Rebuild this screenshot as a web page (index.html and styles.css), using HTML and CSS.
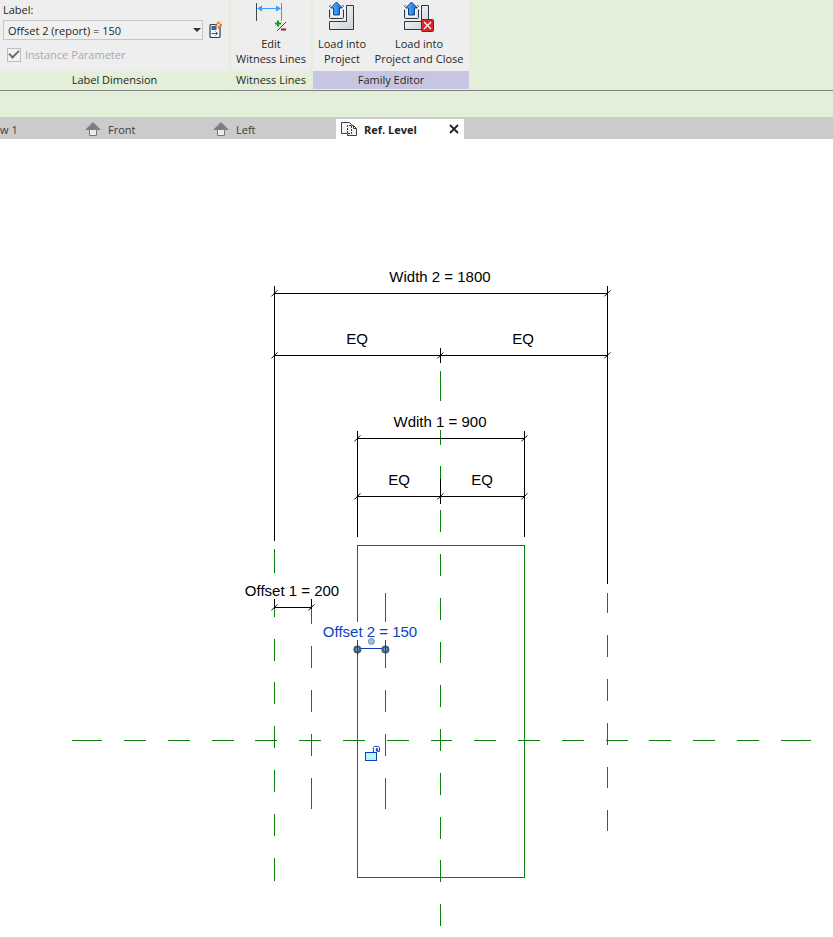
FILE: index.html
```html
<!DOCTYPE html>
<html lang="en">
<head>
    <meta charset="UTF-8">
    <meta name="viewport" content="width=device-width, initial-scale=1.0">
    <title>Family Editor - Ref. Level</title>
    <link rel="stylesheet" href="styles.css">
</head>
<body>
    <header class="ribbon">
        <section class="panel panel-label">
            <div class="panel-body label-body">
                <label class="field-label" for="labelSelect">Label:</label>
                <div class="field-row">
                    <div class="select-wrap">
                        <select id="labelSelect" class="select">
                            <option>Offset 2 (report) = 150</option>
                        </select>
                    </div>
                    <button class="icon-button" type="button" aria-label="Create parameter">
                        <svg width="14" height="18" viewBox="0 0 14 18">
                            <rect x="1" y="3.500" width="10" height="13" rx="1" fill="#f4f7fa" stroke="#2f3b4c" stroke-width="1.200"/>
                            <path d="M2.500 5h5v4h-5z" fill="#2f6aa8"/>
                            <path d="M2.500 12.500h6M6.500 10.500l2 2-2 2" fill="none" stroke="#3b5f86"/>
                            <path d="M9.500 .5v7M6 4h7" stroke="#e8501c" stroke-width="1.400"/>
                            <path d="M7 1.500l5 5M12 1.500l-5 5" stroke="#f07a1e"/>
                            <circle cx="9.500" cy="4" r="1.500" fill="#ffe36a"/>
                        </svg>
                    </button>
                </div>
                <label class="check">
                    <input class="check-box" type="checkbox" checked disabled>
                    <span>Instance Parameter</span>
                </label>
            </div>
            <h2 class="panel-title">Label Dimension</h2>
        </section>

        <section class="panel panel-witness">
            <div class="panel-body tools">
                <button class="tool" type="button">
                    <svg class="tool-icon" width="32" height="34" viewBox="1 -1 32 34">
                        <path d="M2.500 3v18" stroke="#3c4653" fill="none"/>
                        <path d="M27.500 3v18" stroke="#3a9bfc" fill="none"/>
                        <path d="M4 8.500h22" stroke="#3a9bfc"/>
                        <path d="M3 8.500l5-3v6zM27 8.500l-5-3v6z" fill="#3a9bfc"/>
                        <path d="M24 20.500v6M21 23.500h6" stroke="#169a1c" stroke-width="2"/>
                        <path d="M23 31l9-9" stroke="#3c4653"/>
                        <path d="M27 29.500h5" stroke="#b80f22" stroke-width="2"/>
                    </svg>
                    <span>Edit<br>Witness Lines</span>
                </button>
            </div>
            <h2 class="panel-title">Witness Lines</h2>
        </section>

        <section class="panel panel-family">
            <div class="panel-body tools">
                <button class="tool tool-load" type="button">
                    <svg class="tool-icon" width="32" height="34" viewBox="0 0 32 34">
                        <defs>
                            <linearGradient id="block" x1="0" y1="0" x2="1" y2="1">
                                <stop offset="0" stop-color="#fdfdfd"/>
                                <stop offset="1" stop-color="#cdd0d5"/>
                            </linearGradient>
                            <linearGradient id="arrow" x1="0" y1="0" x2="1" y2="0">
                                <stop offset="0" stop-color="#5db4fb"/>
                                <stop offset="1" stop-color="#0d6fe0"/>
                            </linearGradient>
                        </defs>
                        <path d="M20.500 6.500h7v24h-24v-8h17z" fill="url(#block)" stroke="#2e3746" stroke-linejoin="round"/>
                        <rect x="3.500" y="6.500" width="14" height="13" rx="1" fill="#e2e4e8" stroke="#2e3746"/>
                        <path d="M10.500 3l6 6h-3v7h-6v-7h-3z" fill="none" stroke="#fff" stroke-width="3"/>
                        <path d="M10.500 3l6 6h-3v7h-6v-7h-3z" fill="url(#arrow)" stroke="#123f7c"/>
                    </svg>
                    <span>Load into<br>Project</span>
                </button>
                <button class="tool tool-close" type="button">
                    <svg class="tool-icon" width="32" height="34" viewBox="2 0 32 34">
                        <path d="M20.500 6.500h7v24h-24v-8h17z" fill="url(#block)" stroke="#2e3746" stroke-linejoin="round"/>
                        <rect x="3.500" y="6.500" width="14" height="13" rx="1" fill="#e2e4e8" stroke="#2e3746"/>
                        <path d="M10.500 3l6 6h-3v7h-6v-7h-3z" fill="none" stroke="#fff" stroke-width="3"/>
                        <path d="M10.500 3l6 6h-3v7h-6v-7h-3z" fill="url(#arrow)" stroke="#123f7c"/>
                        <rect x="20.500" y="20.500" width="12" height="12" rx="1" fill="#d9262f" stroke="#8d1620"/>
                        <path d="M23 23l7 7M30 23l-7 7" stroke="#fff" stroke-width="1.200"/>
                    </svg>
                    <span>Load into<br>Project and Close</span>
                </button>
            </div>
            <h2 class="panel-title">Family Editor</h2>
        </section>
    </header>

    <div class="options-bar"></div>

    <nav class="tabs">
        <a class="tab tab-first" href="#view1">w 1</a>
        <a class="tab" href="#front">
            <svg class="tab-icon" width="16" height="16" viewBox="0 0 16 16">
                <path d="M4.500 7.500h7v7h-7z" fill="#e9ebed" stroke="#77797c"/>
                <path d="M8 1l8 8H0z" fill="#7d7f82"/>
            </svg>
            <span>Front</span>
        </a>
        <a class="tab" href="#left">
            <svg class="tab-icon" width="16" height="16" viewBox="0 0 16 16">
                <path d="M4.500 7.500h7v7h-7z" fill="#e9ebed" stroke="#77797c"/>
                <path d="M8 1l8 8H0z" fill="#7d7f82"/>
            </svg>
            <span>Left</span>
        </a>
        <div class="tab tab-active">
            <svg class="tab-icon" width="16" height="16" viewBox="0 0 16 16">
                <path d="M.5 1.500h8l2 2v9h-10z" fill="#f3f3f3" stroke="#3b4048"/>
                <path d="M6.500 4.500h6l3 3v7h-9z" fill="#eceef0"/>
                <path d="M10.500 4.500h2l3 3v7h-9v-2M12.500 4.500v3h3" fill="none" stroke="#3b4048"/>
                <path d="M6.500 12V4.500h4v8h-4" fill="none" stroke="#3b4048" stroke-dasharray="2 1"/>
            </svg>
            <span>Ref. Level</span>
            <button class="tab-close" type="button" aria-label="Close view">
                <svg width="10" height="10" viewBox="0 0 10 10">
                    <path d="M1 1l8 8M9 1L1 9" stroke="#222" stroke-width="1.800"/>
                </svg>
            </button>
        </div>
    </nav>

    <main class="canvas">
        <svg class="drawing" viewBox="0 139 833 798">
            <g transform="translate(.4 .4)">
                <!-- reference planes and sketch rectangle -->
                <path class="plane" d="M72 740H102M124 740H146M168 740H190M212 740H234M255 740H277M299 740H321M343 740H365M387 740H409M431 740H452M474 740H496M518 740H540M562 740H584M606 740H628M649 740H671M693 740H715M737 740H759M781 740H811"/>
                <path class="plane" d="M274 549V573M274 609V617M274 639V661M274 682V704M274 726V748M274 770V792M274 814V836M274 858V881"/>
                <path class="plane" d="M311 609V624M311 646V668M311 690V712M311 734V756M311 778V809"/>
                <path class="plane" d="M385 593V622M385 650V668M385 690V712M385 734V756M385 778V809"/>
                <path class="plane" d="M440 371V401M440 430V445M440 466V479M440 510V532M440 554V576M440 598V620M440 642V663M440 685V707M440 729V751M440 773V795M440 817V839M440 860V882M440 904V926"/>
                <path class="plane" d="M607 593V613M607 635V657M607 679V701M607 723V745M607 767V788M607 810V831"/>
                <path class="plane" d="M357 622V545H524V877H357V650"/>

                <!-- dimensions -->
                <path class="dim" d="M274 286V541M607 286V584M274 293H607M274 355H607M440 348V363"/>
                <path class="dim" d="M357 431V537M524 431V537M357 438H524M357 496H524M440 479V504"/>
                <path class="dim" d="M274 599V609M311 599V609M274 607H311"/>
                <path class="tick" d="M271 296l6-6M604 296l6-6M271 358l6-6M437 358l6-6M604 358l6-6"/>
                <path class="tick" d="M354 441l6-6M521 441l6-6M354 499l6-6M437 499l6-6M521 499l6-6M271 610l6-6M308 610l6-6"/>

                <!-- selected dimension -->
                <path class="dim selected" d="M357 640V655M385 640V655M357 648H385"/>
                <g class="grips">
                    <circle cx="357" cy="649" r="3"/>
                    <circle cx="385" cy="649" r="3"/>
                    <circle class="grip-text" cx="371" cy="641" r="3"/>
                </g>
                <path class="dim selected" d="M357 645v9M385 645v9"/>

                <!-- open padlock -->
                <path class="lock" d="M365 752h11v8h-11z"/>
                <path class="lock-arc" d="M373 752v-5l1-1h4l1 1v4h-2v-3h-1v3"/>
            </g>

            <g class="dim-text">
                <text x="440" y="282">Width 2 = 1800</text>
                <text x="357" y="344">EQ</text>
                <text x="523" y="344">EQ</text>
                <text x="440" y="427">Wdith 1 = 900</text>
                <text x="399" y="485">EQ</text>
                <text x="482" y="485">EQ</text>
                <text x="292" y="596">Offset 1 = 200</text>
                <text class="text-selected" x="370" y="637">Offset 2 = 150</text>
            </g>
        </svg>
    </main>
</body>
</html>
```
FILE: styles.css
```css
:root {
    --green: #e3efd8;
    --panel: #eeeeee;
    --lilac: #c6c6e2;
    --tabs: #cbcbcb;
    --text: #262626;
    --plane: #0a800a;
    --blue: #0a3fc0;
}

* {
    margin: 0;
    padding: 0;
    box-sizing: border-box;
}

body {
    background: #fff;
    color: var(--text);
    font-family: "Open Sans", "Noto Sans", sans-serif;
    font-size: 11px;
    line-height: 15px;
}

button {
    border: none;
    background: none;
    color: inherit;
    font: inherit;
    cursor: pointer;
}

/* Ribbon */
.ribbon {
    display: flex;
    gap: 2px;
    height: 91px;
    background: var(--green);
    border-bottom: 1px solid #808080;
}

.panel {
    display: flex;
    flex-direction: column;
    padding-bottom: 1px;
    background: var(--panel);
}

.panel-label {
    width: 229px;
}

.panel-witness {
    width: 80px;
}

.panel-family {
    width: 156px;
}

.panel-body {
    flex: 1;
}

.panel-title {
    height: 18px;
    font-size: 11px;
    font-weight: 400;
    line-height: 18px;
    text-align: center;
    white-space: nowrap;
    background: var(--green);
}

.panel-family .panel-title {
    background: var(--lilac);
}

.label-body {
    display: flex;
    flex-direction: column;
    padding: 2px 3px 0;
}

.field-label {
    height: 18px;
}

.field-row {
    display: flex;
    align-items: center;
    gap: 6px;
    height: 20px;
}

.select-wrap {
    position: relative;
    width: 200px;
}

.select {
    display: block;
    width: 100%;
    height: 20px;
    padding: 0 4px;
    appearance: none;
    border: 1px solid #c6c6c6;
    border-radius: 0;
    background: #f0f0f0;
    color: var(--text);
    font: inherit;
}

.select-wrap::after {
    content: "";
    position: absolute;
    top: 8px;
    right: 2px;
    border: 4px solid transparent;
    border-top-color: #333;
    border-bottom: none;
    pointer-events: none;
}

.icon-button svg {
    display: block;
}

.check {
    display: flex;
    align-items: center;
    gap: 4px;
    padding: 7px 4px 0;
    color: #a9a9a9;
}

.check-box {
    display: grid;
    place-items: center;
    width: 14px;
    height: 14px;
    appearance: none;
    border: 1px solid #bcbcbc;
    background: #f2f2f2;
}

.check-box:checked::before {
    content: "";
    width: 8px;
    height: 4px;
    margin-bottom: 3px;
    border: solid #6a6e74;
    border-width: 0 0 2px 2px;
    transform: rotate(-45deg);
}

.tools {
    display: flex;
}

.tool {
    display: flex;
    flex-direction: column;
    align-items: center;
    width: 80px;
    white-space: nowrap;
}

.tool-icon {
    display: block;
    margin-top: -1px;
    margin-bottom: 3px;
    overflow: visible;
}

.tool-load {
    width: 58px;
}

.tool-close {
    width: 96px;
}

/* Options bar and view tabs */
.options-bar {
    height: 26px;
    background: var(--green);
}

.tabs {
    display: flex;
    height: 22px;
    background: var(--tabs);
    overflow: hidden;
}

.tab {
    display: flex;
    align-items: center;
    gap: 7px;
    width: 128px;
    padding: 2px 5px 0;
    color: #3c3c3c;
    text-decoration: none;
    white-space: nowrap;
}

.tab-first {
    width: 80px;
    padding-left: 0;
}

.tab-active {
    margin-top: 2px;
    padding-top: 0;
    background: #fff;
    color: #222;
    font-weight: 700;
}

.tab-close {
    margin-left: auto;
}

.tab-close svg {
    display: block;
}

/* Drawing area */
.drawing {
    display: block;
    width: 100%;
    height: auto;
}

.plane,
.dim,
.tick {
    fill: none;
    stroke-width: 1;
}

.plane {
    stroke: var(--plane);
    shape-rendering: crispEdges;
}

.dim {
    stroke: #000;
    shape-rendering: crispEdges;
}

.tick {
    stroke: #000;
}

.dim.selected {
    stroke: var(--blue);
}

.grips circle {
    fill: #5c94d6;
    stroke: #4d5a68;
    stroke-width: 2;
}

.grips .grip-text {
    fill: #9cc0e6;
    stroke: #78889a;
    stroke-width: 1;
}

.lock {
    fill: #bdf6fb;
    stroke: var(--blue);
    shape-rendering: crispEdges;
}

.lock-arc {
    fill: none;
    stroke: var(--blue);
}

.dim-text text {
    font-family: "Liberation Sans", Arial, sans-serif;
    font-size: 15px;
    text-anchor: middle;
    fill: #000;
}

.dim-text .text-selected {
    fill: var(--blue);
}
```
